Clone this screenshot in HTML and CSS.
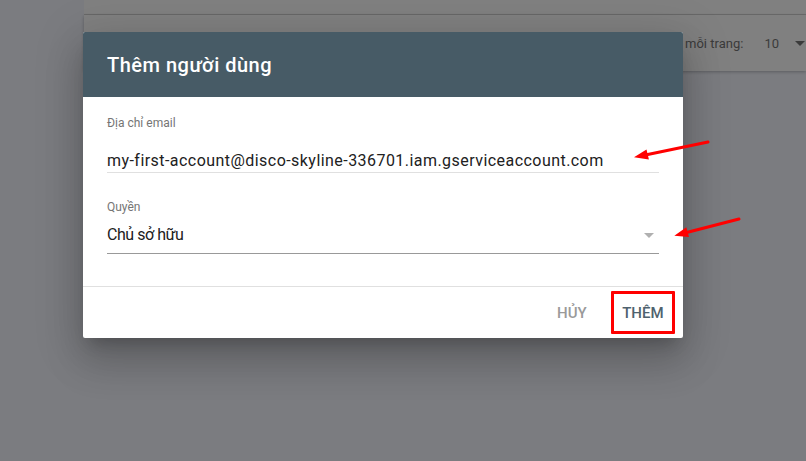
FILE: index.html
```html
<!DOCTYPE html>
<html lang="vi">
<head>
<meta charset="utf-8">
<title>Thêm người dùng</title>
<link rel="stylesheet" href="styles.css">
</head>
<body>
<div class="page">
  <div class="sidebar"></div>
  <div class="main">
    <div class="topstrip"></div>
    <div class="pager">
      <span class="pager-label">Số hàng mỗi trang:</span>
      <span class="pager-value">10</span>
      <span class="pager-caret"></span>
    </div>
  </div>
</div>

<div class="dialog">
  <div class="dialog-header">Thêm người dùng</div>
  <div class="dialog-body">
    <div class="field">
      <div class="field-label">Địa chỉ email</div>
      <div class="field-input email-input">my-first-account@disco-skyline-336701.iam.gserviceaccount.com</div>
    </div>
    <div class="field field-select">
      <div class="field-label">Quyền</div>
      <div class="field-input select-input">
        <span class="select-value">Chủ sở hữu</span>
        <span class="select-caret"></span>
      </div>
    </div>
  </div>
  <div class="dialog-footer">
    <button class="btn btn-cancel">HỦY</button>
    <button class="btn btn-add">THÊM</button>
  </div>
</div>

<svg class="annotations" width="806" height="461" viewBox="0 0 806 461">
  <line x1="708" y1="142" x2="647.7" y2="154.5" stroke="#ff0000" stroke-width="3" stroke-linecap="round"/>
  <polygon points="634,157.3 648.9,159.6 646.5,149.4" fill="#ff0000"/>
  <line x1="739" y1="219" x2="687.6" y2="232.2" stroke="#ff0000" stroke-width="3" stroke-linecap="round"/>
  <polygon points="674.3,235.7 689,237.1 686.3,227.3" fill="#ff0000"/>
</svg>
</body>
</html>
```
FILE: styles.css
```css
html, body {
  margin: 0;
  padding: 0;
}
body {
  width: 806px;
  height: 461px;
  overflow: hidden;
  background: #7b7c80;
  font-family: Roboto, "Noto Sans", Arial, sans-serif;
  position: relative;
}
.page {
  display: flex;
  height: 100%;
}
.sidebar {
  width: 84px;
  flex: none;
  background: #7b7c80;
}
.main {
  flex: 1;
  display: flex;
  flex-direction: column;
}
.topstrip {
  height: 14px;
  background: #808080;
  border-bottom: 1px solid #6c6c6c;
}
.pager {
  height: 56px;
  background: #808080;
  box-shadow: 0 1px 3px rgba(0, 0, 0, 0.25);
  display: flex;
  justify-content: flex-end;
  align-items: center;
  font-size: 13px;
  color: #3b3b3b;
  white-space: nowrap;
  overflow: hidden;
}
.pager-label {
  margin-right: 21px;
}
.pager-value {
  margin-right: 16px;
}
.pager-caret {
  width: 0;
  height: 0;
  border-left: 5px solid transparent;
  border-right: 5px solid transparent;
  border-top: 5px solid #3b3b3b;
  margin-right: 1px;
}

.dialog {
  position: absolute;
  left: 83px;
  top: 32px;
  width: 600px;
  background: #ffffff;
  border-radius: 2px;
  box-shadow: 0 11px 15px -7px rgba(0, 0, 0, 0.2), 0 24px 38px 3px rgba(0, 0, 0, 0.14), 0 9px 46px 8px rgba(0, 0, 0, 0.12);
}
.dialog-header {
  height: 65px;
  background: #475b66;
  border-radius: 2px 2px 0 0;
  color: #ffffff;
  font-size: 20px;
  font-weight: 500;
  letter-spacing: 0.5px;
  line-height: 24px;
  padding: 0 24px;
  display: flex;
  align-items: center;
}
.dialog-body {
  padding: 18px 24px 32px;
  border-bottom: 1px solid #e0e0e0;
}
.field-label {
  font-size: 12px;
  line-height: 16px;
  color: #757575;
}
.field-input {
  font-size: 16px;
  color: #212121;
  border-bottom: 1px solid #e0e0e0;
  white-space: nowrap;
}
.email-input {
  margin-top: 19px;
  line-height: 22px;
  letter-spacing: 0.45px;
}
.field-select {
  margin-top: 26px;
}
.select-input {
  margin-top: 8px;
  line-height: 24px;
  padding-bottom: 6px;
  border-bottom-color: #999999;
  display: flex;
  justify-content: space-between;
  align-items: center;
}
.select-value {
  letter-spacing: -0.45px;
}
.select-caret {
  width: 0;
  height: 0;
  border-left: 5px solid transparent;
  border-right: 5px solid transparent;
  border-top: 5px solid #b0b0b0;
  margin-right: 5px;
}
.dialog-footer {
  display: flex;
  justify-content: flex-end;
  align-items: center;
  padding: 4px 8px;
}
.btn {
  font-family: Roboto, "Noto Sans", Arial, sans-serif;
  font-size: 15px;
  font-weight: 500;
  background: transparent;
  border: 3px solid transparent;
  height: 43px;
  padding: 0 8.5px;
  margin: 0;
  cursor: pointer;
}
.btn-cancel {
  color: #9a9a9a;
  padding: 0 13px;
  margin-right: 8px;
}
.btn-add {
  color: #4e626e;
  border-color: #ff0000;
  border-radius: 1px;
}
.annotations {
  position: absolute;
  left: 0;
  top: 0;
  pointer-events: none;
}
```
